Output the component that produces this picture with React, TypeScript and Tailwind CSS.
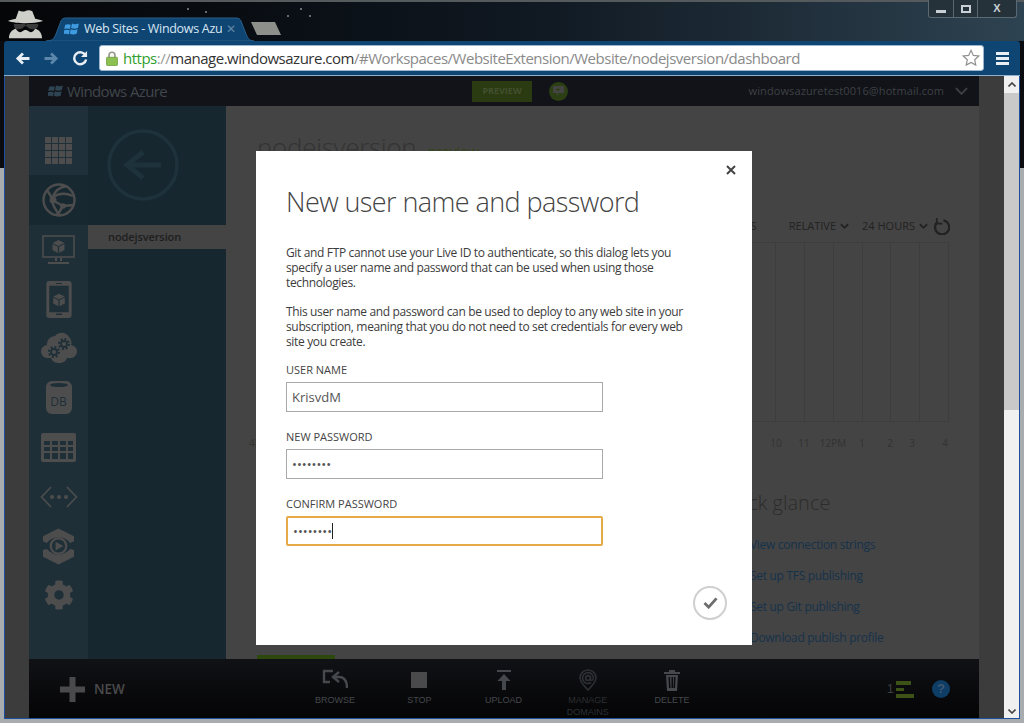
import { FaCog } from "react-icons/fa";

const sans = "font-['Open_Sans','Noto_Sans',sans-serif]";

function WindowsLogo({ className }: { className: string }) {
  return (
    <svg viewBox="0 0 20 18" className={className} fill="currentColor">
      <path d="M1.500 3.200c2.400-1 4.600-1 7 0L7.400 8.400c-2.400-1-4.600-1-7 0z" />
      <path d="M10 1.600c2.600 1.200 5 1.200 8.600 0l-1.200 5.600c-3 1.200-5.600 1.200-8.600 0z" />
      <path d="M.2 10c2.400-1 4.600-1 7 0L6 15.200c-2.400-1-4.600-1-7 0z" />
      <path d="M8.400 8.600c3 1.200 5.600 1.200 8.600 0l-1.200 5.600c-3 1.200-5.600 1.200-8.600 0z" />
    </svg>
  );
}

function Incognito() {
  return (
    <svg viewBox="4 0 36 40" className="w-[35px] h-[30px]" preserveAspectRatio="none">
      <path d="M12 13 15 2c3 1.500 5 1.500 7 .5s5-1 7 .5l3 10c3 .7 6 1.800 8 3-5 2-12 3-18 3s-14-1-18-3c2-1.200 5-2.300 8-3z" fill="#cfcfca" />
      <path d="M5 39c0-7 3-11 7-13 1 3 3 5 5 5l4-3h2l4 3c2 0 4-2 5-5 4 2 7 6 7 13z" fill="#cfcfca" />
      <path d="M10 20h11l1 1h1l1-1h11v2c0 3-3 5-6 5s-5-2-6-4h-2c-1 2-3 4-6 4s-5-2-5-5z" fill="#3a3a3a" />
    </svg>
  );
}

function Cube({ x, y }: { x: number; y: number }) {
  return (
    <g transform={`translate(${x} ${y})`} fill="currentColor">
      <path d="M6 0l6 3-6 3-6-3z" />
      <path d="M0 4l5.400 2.800V13L0 10z" />
      <path d="M12 4 6.600 6.800V13l5.400-3z" />
    </g>
  );
}

function NavGrid() {
  return (
    <svg viewBox="0 0 27 27" className="w-[27px] h-[27px]" fill="currentColor">
      {[0, 7, 14, 21].map((y) =>
        [0, 7, 14, 21].map((x) => <rect key={`${x}-${y}`} x={x} y={y} width="6" height="6" />)
      )}
    </svg>
  );
}

function NavGlobe() {
  return (
    <svg viewBox="0 0 34 34" className="w-[34px] h-[34px]" fill="none" stroke="currentColor" strokeWidth="2.400">
      <circle cx="17" cy="17" r="15.500" />
      <path d="M25 3C16 4 12 9 10 16" />
      <path d="M5 7c2 3 4 6 5 9" />
      <path d="M10 17c1 6 4 11 8 15" />
      <path d="M11 14c6-4 13-4 20-1" />
      <path d="M12 18l9 5" />
      <path d="M21 23l11-1M20 24c-1 3-3 6-6 8" />
      <circle cx="11" cy="17" r="3.500" fill="currentColor" stroke="none" />
      <circle cx="21" cy="23" r="2.800" fill="currentColor" stroke="none" />
    </svg>
  );
}

function NavMonitor() {
  return (
    <svg viewBox="0 0 33 30" className="w-[33px] h-[30px] text-[#4d4d4d]">
      <g fill="none" stroke="currentColor">
        <rect x="1" y="1" width="31" height="21" strokeWidth="1.600" />
        <path d="M14 23v3M19 23v3" strokeWidth="2" />
        <path d="M6 28h21" strokeWidth="2" />
      </g>
      <Cube x={10.5} y={5} />
    </svg>
  );
}

function NavPhone() {
  return (
    <svg viewBox="0 0 26 38" className="w-[26px] h-[37px] text-[#4d4d4d]">
      <path fill="currentColor" fillRule="evenodd" d="M3 0h20a3 3 0 0 1 3 3v32a3 3 0 0 1-3 3H3a3 3 0 0 1-3-3V3a3 3 0 0 1 3-3zm0 5v27h20V5zm7-3v1h6V2zm0 31.500v1.500h6v-1.500z" />
      <Cube x={7} y={13} />
    </svg>
  );
}

function NavCloud() {
  return (
    <svg viewBox="0 0 38 32" className="w-[38px] h-[32px]" fill="currentColor">
      <path d="M8 26a6.500 6.500 0 0 1-1-13 8 8 0 0 1 8-9 8.500 8.500 0 0 1 14 1 7.500 7.500 0 0 1 2 8 6.500 6.500 0 0 1-1 13c-1 0-2 0-3 0-1 3-4 5-8 5-4 0-7-2-8-5z" />
      <g fill="none" stroke="#1f2f38">
        <circle cx="14" cy="20" r="3" strokeWidth="1.800" />
        <circle cx="14" cy="20" r="5" strokeWidth="2" strokeDasharray="2 1.900" />
        <circle cx="24" cy="12" r="3" strokeWidth="1.800" />
        <circle cx="24" cy="12" r="5" strokeWidth="2" strokeDasharray="2 1.900" />
      </g>
    </svg>
  );
}

function NavDb() {
  return (
    <div className="relative w-[26px] h-[33px] rounded-[6px] bg-[#4d4d4d] flex items-end justify-center pb-[2px]">
      <div className="absolute top-[2px] left-[4px] right-[4px] h-[4px] rounded-[50%] bg-[#1f2f38]" />
      <span className="text-[#1f2f38] text-[12px] leading-[20px] font-['Open_Sans',sans-serif]">DB</span>
    </div>
  );
}

function NavTable() {
  return (
    <svg viewBox="0 0 35 29" className="w-[35px] h-[29px]" fill="currentColor">
      <path fillRule="evenodd" d="M2 0h31a2 2 0 0 1 2 2v25a2 2 0 0 1-2 2H2a2 2 0 0 1-2-2V2a2 2 0 0 1 2-2zm1 8v4h6V8zm8 0v4h6V8zm8 0v4h6V8zm8 0v4h5V8zM3 14v4h6v-4zm8 0v4h6v-4zm8 0v4h6v-4zm8 0v4h5v-4zM3 20v6h6v-6zm8 0v6h6v-6zm8 0v6h6v-6zm8 0v6h5v-6z" />
    </svg>
  );
}

function NavCode() {
  return (
    <svg viewBox="0 0 38 22" className="w-[38px] h-[22px]">
      <path d="M11 1 1.500 11 11 21M27 1l9.500 10L27 21" fill="none" stroke="currentColor" strokeWidth="1.600" />
      <g fill="currentColor">
        <circle cx="12" cy="11" r="2" />
        <circle cx="19" cy="11" r="2" />
        <circle cx="26" cy="11" r="2" />
      </g>
    </svg>
  );
}

function NavMedia() {
  return (
    <svg viewBox="0 0 34 37" className="w-[33px] h-[37px]" fill="currentColor">
      <path d="M17 0 33 8v5l-4 2c-3-4-7-6-12-6S8 11 5 15l-4-2V8z" />
      <path d="M17 37 33 29v-7l-4-1c-3 3-7 6-12 6S8 24 5 21l-4 1v7z" />
      <circle cx="17" cy="18" r="8" fill="none" stroke="currentColor" strokeWidth="2.400" />
      <path d="M14 13.500 22 18l-8 4.500z" />
    </svg>
  );
}

function SideNav() {
  const cell = "h-[49.400px] shrink-0 flex items-center justify-center";
  return (
    <div className="w-[59px] h-full flex flex-col bg-[#1f2f38] text-[#4d4d4d]">
      <div className="h-[69px] shrink-0 flex items-center justify-center pt-[19px] bg-[#20303a]"><NavGrid /></div>
      <div className="h-[50px] shrink-0 flex items-center justify-center bg-[#182830]"><NavGlobe /></div>
      <div className={cell}><NavMonitor /></div>
      <div className={cell}><NavPhone /></div>
      <div className={cell}><NavCloud /></div>
      <div className={cell}><NavDb /></div>
      <div className={cell}><NavTable /></div>
      <div className={cell}><NavCode /></div>
      <div className={cell}><NavMedia /></div>
      <div className={cell}><FaCog className="w-[30px] h-[30px]" /></div>
    </div>
  );
}

function ToolItem({ label, icon, dim }: { label: string; icon: React.ReactNode; dim?: boolean }) {
  return (
    <div className={`w-[84.250px] flex flex-col items-center ${dim ? "text-[#2c2f33]" : "text-[#45484c]"}`}>
      <div className="h-[32px] shrink-0 flex items-center justify-center">{icon}</div>
      <div className="w-[60px] text-center -mt-[1px] text-[9px] leading-[11.500px] font-['Liberation_Sans',sans-serif]">{label}</div>
    </div>
  );
}

function BottomBar() {
  return (
    <div className="h-[59px] shrink-0 flex bg-gradient-to-b from-[#111216] to-[#050506] font-['Liberation_Sans',sans-serif]">
      <div className="w-[264px] shrink-0 flex items-center pl-[31px] pt-[1px] text-[#4a4a4c]">
        <svg viewBox="0 0 25 25" className="w-[25px] h-[25px]" fill="currentColor">
          <path d="M9.500 0h6v9.500H25v6h-9.500V25h-6v-9.500H0v-6h9.500z" />
        </svg>
        <span className={`ml-[9px] text-[13.500px] font-semibold ${sans}`}>NEW</span>
      </div>
      <div className="flex pt-[5px]">
        <ToolItem
          label="BROWSE"
          icon={
            <svg viewBox="0 0 26 22" className="w-[26px] h-[22px]" fill="none" stroke="currentColor" strokeWidth="2.400">
              <path d="M11 2H2v11h6" />
              <path d="M17 3l-6 5 6 5" />
              <path d="M11 8h6c5 0 8 4 8 11" />
            </svg>
          }
        />
        <ToolItem label="STOP" icon={<div className="w-[16px] h-[16px] bg-[#4a4a4c]" />} />
        <ToolItem
          label="UPLOAD"
          icon={
            <svg viewBox="0 0 14 20" className="w-[14px] h-[20px]" fill="currentColor">
              <path d="M0 0h14v2H0zM7 4l6.500 7H9v9H5v-9H.5z" />
            </svg>
          }
        />
        <ToolItem
          dim
          label="MANAGE DOMAINS"
          icon={
            <svg viewBox="0 0 18 22" className="w-[18px] h-[22px]" fill="none" stroke="currentColor" strokeWidth="1.600">
              <path d="M9 21C4 16 1 12 1 9a8 8 0 0 1 16 0c0 3-3 7-8 12z" />
              <circle cx="9" cy="9" r="2.400" />
              <path d="M11.400 7v3c0 2 3 1.500 3-1a5.400 5.400 0 1 0-2.400 4.500" />
            </svg>
          }
        />
        <ToolItem
          label="DELETE"
          icon={
            <svg viewBox="0 0 16 21" className="w-[16px] h-[21px]" fill="currentColor">
              <path d="M5 0h6v2h5v2H0V2h5zM2 5h12l-1 16H3zm2.500 2 .5 11h1.500L6 7zm3 0v11H9V7zm2.500 0-.5 11H11l.5-11z" fillRule="evenodd" />
            </svg>
          }
        />
      </div>
      <div className="flex-1 flex items-center justify-end pr-[29px] pt-[1px]">
        <span className="text-[#3a3d40] text-[13px] mr-[2px]">1</span>
        <svg viewBox="0 0 18 17" className="w-[18px] h-[17px] text-[#3c5217]" fill="currentColor">
          <path d="M0 0h15v4H0zM0 7h8v3H0zM0 13h18v4H0z" />
        </svg>
        <div className="ml-[18px] w-[18px] h-[18px] rounded-full bg-[#0e3d66] flex items-center justify-center text-[#3f5870] text-[13px] font-bold">?</div>
      </div>
    </div>
  );
}

const hourLabels = [
  { t: "10", gap: "ml-0" },
  { t: "11", gap: "ml-[8px]" },
  { t: "12PM", gap: "ml-[9px]" },
  { t: "1", gap: "ml-[9px]" },
  { t: "2", gap: "ml-[8px]" },
  { t: "3", gap: "ml-[2px]" },
  { t: "4", gap: "ml-[13px]" },
];

function Chev() {
  return (
    <svg viewBox="0 0 10 7" className="w-[9px] h-[7px] ml-[4px]" fill="none" stroke="#222222" strokeWidth="2">
      <path d="M1 1l4 4 4-4" />
    </svg>
  );
}

function Dashboard() {
  return (
    <div className={`flex-1 min-w-0 bg-[#444444] pl-[31px] relative ${sans}`}>
      <div className="flex items-baseline h-[47px] pt-[22px]">
        <span className="text-[26px] leading-[38px] font-light tracking-[-0.3px] text-[#333333]">nodejsversion</span>
        <span className="ml-[11px] text-[14px] text-[#2f4515]">preview</span>
      </div>
      <div className="flex justify-end items-center h-[89px] pt-[58px] pr-[29px] text-[11px] text-[#222222]">
        <span className="mr-[32px]">METRICS</span>
        <span className="flex items-center">RELATIVE<Chev /></span>
        <span className="flex items-center ml-[13px]">24 HOURS<Chev /></span>
        <svg viewBox="0 0 18 18" className="w-[17px] h-[17px] ml-[5px]" fill="none" stroke="#222222" strokeWidth="2.400">
          <path d="M5 4a7.500 7.500 0 1 0 6-1.500" />
          <path d="M4 0v6h6" strokeWidth="1.800" />
        </svg>
      </div>
      <div className="ml-[-1px] mr-[30px] h-[180px] flex justify-end border-y border-r border-[#3d3d3d]">
        {[0, 1, 2, 3, 4, 5, 6].map((i) => (
          <div key={i} className="w-[28.800px] border-l border-[#3d3d3d]" />
        ))}
      </div>
      <div className="flex items-center h-[16px] mt-[13px] -ml-[8px] text-[10px] text-[#333333]">
        <span>4P</span>
        <span className="ml-auto flex pr-[24px]">
          {hourLabels.map((l) => (
            <span key={l.t} className={`w-[20px] text-center whitespace-nowrap flex justify-center ${l.gap}`}>{l.t}</span>
          ))}
        </span>
      </div>
      <div className="pl-[463px] pt-[39px]">
        <div className="text-[20px] leading-[26px] font-light text-[#2c2c2c]">quick glance</div>
        <div className="mt-[20px] pl-[30px] flex flex-col gap-[13px] text-[12px] leading-[18px] tracking-[-0.3px] text-[#16324b]">
          <span>View connection strings</span>
          <span>Set up TFS publishing</span>
          <span>Set up Git publishing</span>
          <span>Download publish profile</span>
        </div>
      </div>
      <div className="absolute left-[31px] bottom-0 w-[78px] h-[4px] bg-[#2d480c]" />
    </div>
  );
}

function Dialog() {
  const inputClass = "block w-[317px] h-[30px] px-[5px] border border-[#a9a9a9] bg-white text-[#555555] text-[13px] leading-[28px]";
  const labelClass = "text-[11px] leading-[15px] text-[#444444] mb-[5px]";
  return (
    <div className={`absolute left-[256px] top-[151px] w-[496px] h-[494px] bg-white pl-[30px] ${sans}`}>
      <div className="absolute right-[16px] top-[14px] text-[#444444]">
        <svg viewBox="0 0 10 10" className="w-[10px] h-[10px]" fill="none" stroke="currentColor" strokeWidth="2">
          <path d="M1 1l8 8M9 1l-8 8" />
        </svg>
      </div>
      <h1 className="pt-[31px] text-[27px] leading-[40px] font-light tracking-[-0.58px] text-[#444444]">New user name and password</h1>
      <div className="mt-[23px] w-[400px] text-[12px] leading-[15px] tracking-[-0.35px] text-[#3c3c3c]">
        <p>Git and FTP cannot use your Live ID to authenticate, so this dialog lets you specify a user name and password that can be used when using those technologies.</p>
        <p className="mt-[14px]">This user name and password can be used to deploy to any web site in your subscription, meaning that you do not need to set credentials for every web site you create.</p>
      </div>
      <div className="mt-[13px]">
        <div className={labelClass}>USER NAME</div>
        <div className={inputClass}>KrisvdM</div>
        <div className={`${labelClass} mt-[17px]`}>NEW PASSWORD</div>
        <div className={`${inputClass} text-[#333333]`}>••••••••</div>
        <div className={`${labelClass} mt-[17px]`}>CONFIRM PASSWORD</div>
        <div className={`${inputClass} flex items-center border-2 border-[#e6ab48] rounded-[2px] text-[#333333]`}>
          <span>••••••••</span>
          <span className="w-px h-[16px] bg-[#222222]" />
        </div>
      </div>
      <div className="absolute right-[25px] bottom-[25px] w-[34px] h-[34px] rounded-full border-2 border-[#cfcfcf] flex items-center justify-center">
        <svg viewBox="0 0 16 13" className="w-[15px] h-[12px]" fill="none" stroke="#6d6d6d" strokeWidth="3">
          <path d="M1.500 6.500 6 11 14.500 1.500" />
        </svg>
      </div>
    </div>
  );
}

const stars = [
  "left-[187px] top-[6px]",
  "left-[205px] top-[9px]",
  "left-[287px] top-[13px]",
  "left-[300px] top-[6px]",
  "left-[309px] top-[13px]",
];

export default function App() {
  return (
    <div className="relative w-[1024px] h-[723px] overflow-hidden flex flex-col bg-[linear-gradient(to_bottom,#0a0c10_168px,#a8acae_168px)]">
      {/* title strip with tab */}
      <div className="h-[41px] shrink-0 relative flex items-end pl-[8px] bg-gradient-to-r from-[#050608] via-[#0f1720] to-[#2e4351] border-t-2 border-[#555a5d]">
        {stars.map((s) => (
          <span key={s} className={`absolute w-[2px] h-[2px] rounded-full bg-[#7f8c99] ${s}`} />
        ))}
        <div className="w-[36px] h-[39px] shrink-0 flex items-end pb-[2px]"><Incognito /></div>
        <div className="relative w-[208px] h-[24px] ml-[2px] flex items-center pl-[18px] text-[#d7e6f2] text-[12.500px] font-['Open_Sans',sans-serif]">
          <svg viewBox="0 0 208 24" className="absolute inset-0 w-full h-full" preserveAspectRatio="none">
            <path d="M0 24c6 0 8-2 10-7L15 4c1-2 2-3 5-3h170c3 0 4 1 5 3l5 13c2 5 4 7 8 7z" fill="#0f4573" stroke="#2a5f8a" />
          </svg>
          <WindowsLogo className="relative w-[16px] h-[15px] text-[#3f9be0]" />
          <span className="relative ml-[4px] w-[138px] overflow-hidden whitespace-nowrap tracking-[-0.3px]">Web Sites - Windows Azure</span>
          <span className="relative ml-[4px] text-[#5f86a6] text-[12px]">✕</span>
        </div>
        <div className="w-[30px] h-[13px] ml-[-3px] mb-[6px] bg-[#8d8f8a] [clip-path:polygon(0_0,80%_0,100%_100%,20%_100%)]" />
        <div className="absolute right-[7px] top-[-2px] h-[18px] w-[89px] flex rounded-b-[3px] border border-t-0 border-[#5a6a74] bg-[#26323a] text-[#c8d0d5]">
          <div className="w-[25px] flex items-center justify-center border-r border-[#5a6a74] pt-[6px]"><div className="w-[10px] h-[3px] bg-[#c8d0d5]" /></div>
          <div className="w-[24px] flex items-center justify-center border-r border-[#5a6a74]"><div className="w-[10px] h-[8px] border-2 border-[#c8d0d5]" /></div>
          <div className="flex-1 flex items-center justify-center text-[11px] font-bold font-['Liberation_Sans',sans-serif]">X</div>
        </div>
      </div>

      {/* browser toolbar */}
      <div className="h-[35px] shrink-0 mx-[4px] flex items-center bg-[#0f4573] rounded-t-[3px] border-b border-[#8fb0cc]">
        <div className="w-[95px] flex items-center pl-[11px] gap-[14px]">
          <svg viewBox="0 0 16 14" className="w-[15px] h-[13px] text-[#e8eef3]" fill="none" stroke="currentColor" strokeWidth="3"><path d="M15.500 7H3M8.500 1.500 3 7l5.500 5.500" /></svg>
          <svg viewBox="0 0 16 14" className="w-[15px] h-[13px] text-[#5c87ab]" fill="none" stroke="currentColor" strokeWidth="3"><path d="M.5 7H13M7.500 1.500 13 7l-5.500 5.500" /></svg>
          <svg viewBox="0 0 16 16" className="w-[15px] h-[15px] text-[#e8eef3]" fill="none" stroke="currentColor" strokeWidth="2.600">
            <path d="M13.500 5a6.400 6.400 0 1 0 .5 4" />
            <path d="M15 0v6.500H8.500z" fill="currentColor" stroke="none" />
          </svg>
        </div>
        <div className="w-[885px] h-[26px] flex items-center bg-white rounded-[3px] border border-[#9cb5cf] pl-[6px] pr-[3px] text-[15px] whitespace-nowrap font-['Open_Sans',sans-serif]">
          <svg viewBox="0 0 14 18" className="w-[12px] h-[15px] shrink-0 mr-[5px]">
            <path d="M3.500 8V5a3.500 3.500 0 0 1 7 0v3" fill="none" stroke="#9a9a8c" strokeWidth="2" />
            <rect x="0.500" y="7.500" width="13" height="10" rx="1" fill="#8cc152" stroke="#6d9c3a" />
          </svg>
          <span className="tracking-[-0.49px]">
            <span className="text-[#2f9e2f]">https</span>
            <span className="text-[#9a9a9a]">://</span>
            <span className="text-[#333333]">manage.windowsazure.com</span>
            <span className="text-[#8a8a8a]">/#Workspaces/WebsiteExtension/Website/nodejsversion/dashboard</span>
          </span>
          <svg viewBox="0 0 20 20" className="w-[18px] h-[18px] ml-auto" fill="none" stroke="#8f8f8f" strokeWidth="1.300">
            <path d="m10 1.500 2.600 5.600 6 .7-4.500 4.100 1.200 6L10 15l-5.300 2.900 1.200-6L1.400 7.800l6-.7z" />
          </svg>
        </div>
        <div className="flex-1 flex flex-col items-center gap-[2px]">
          <div className="w-[13px] h-[3px] bg-[#e8eef3]" />
          <div className="w-[13px] h-[3px] bg-[#e8eef3]" />
          <div className="w-[13px] h-[3px] bg-[#e8eef3]" />
        </div>
      </div>

      {/* page */}
      <div className="flex-1 min-h-0 mx-[4px] flex border-x border-b border-[#1d4f9e]">
        <div className="w-[24px] shrink-0 bg-[#3c3c3c]" />
        <div className="w-[950px] shrink-0 flex flex-col">
          <div className={`h-[30px] shrink-0 bg-[#111318] flex items-center pl-[19px] pr-[11px] ${sans}`}>
            <WindowsLogo className="w-[16px] h-[15px] text-[#2f4452]" />
            <span className="ml-[3px] w-[405px] text-[15px] tracking-[-0.6px] text-[#40464b]">Windows Azure</span>
            <span className="w-[60px] h-[21px] bg-[#2a3b12] text-[#43502f] text-[9px] font-bold flex items-center justify-center">PREVIEW</span>
            <span className="ml-[17px] w-[19px] h-[19px] rounded-full bg-[#2c3f14] flex items-center justify-center">
              <svg viewBox="0 0 11 10" className="w-[11px] h-[10px]">
                <path fillRule="evenodd" fill="#444444" d="M0 0h11v7H6L4 10V7H0zm4.500 1.500v1.500H3v1h1.500v1.500h1V4H7V3H5.500V1.500z" />
              </svg>
            </span>
            <span className="ml-auto text-[11px] tracking-[0.1px] text-[#3f4145]">windowsazuretest0016@hotmail.com</span>
            <svg viewBox="0 0 14 8" className="w-[13px] h-[8px] ml-[11px]" fill="none" stroke="#3f4145" strokeWidth="2"><path d="M1 1l6 6 6-6" /></svg>
          </div>
          <div className="flex-1 min-h-0 flex overflow-hidden">
            <SideNav />
            <div className="w-[138px] shrink-0 bg-[#16272f] flex flex-col">
              <div className="h-[119px] shrink-0 pt-[23px] pl-[19px]">
                <svg viewBox="0 0 72 72" className="w-[72px] h-[72px]" fill="none" stroke="#1e323c" strokeWidth="3.500">
                  <circle cx="36" cy="36" r="34" />
                  <path d="M54 36H22M36 23 20 36l16 13" strokeWidth="5" />
                </svg>
              </div>
              <div className={`h-[24px] shrink-0 bg-[#444444] text-[#1e1e1e] text-[11px] font-semibold tracking-[-0.1px] pl-[20px] pt-[1px] flex items-center ${sans}`}>nodejsversion</div>
            </div>
            <Dashboard />
          </div>
          <BottomBar />
        </div>
        <div className="w-[25px] shrink-0 bg-[#3c3c3c]" />
        <div className="flex-1 bg-[#f0f0f0] flex flex-col">
          <div className="h-[17px] shrink-0 flex items-center justify-center">
            <svg viewBox="0 0 8 5" className="w-[8px] h-[5px]" fill="none" stroke="#444444" strokeWidth="1.600"><path d="M.500 4.500 4 1l3.500 3.500" /></svg>
          </div>
          <div className="h-[317px] shrink-0 bg-[#c9c9c9]" />
          <div className="flex-1" />
          <div className="h-[14px] shrink-0 flex items-center justify-center">
            <svg viewBox="0 0 8 5" className="w-[8px] h-[5px]" fill="none" stroke="#444444" strokeWidth="1.600"><path d="M.500.500 4 4 7.500.500" /></svg>
          </div>
        </div>
      </div>
      <div className="h-[4px] shrink-0" />

      <Dialog />
    </div>
  );
}
